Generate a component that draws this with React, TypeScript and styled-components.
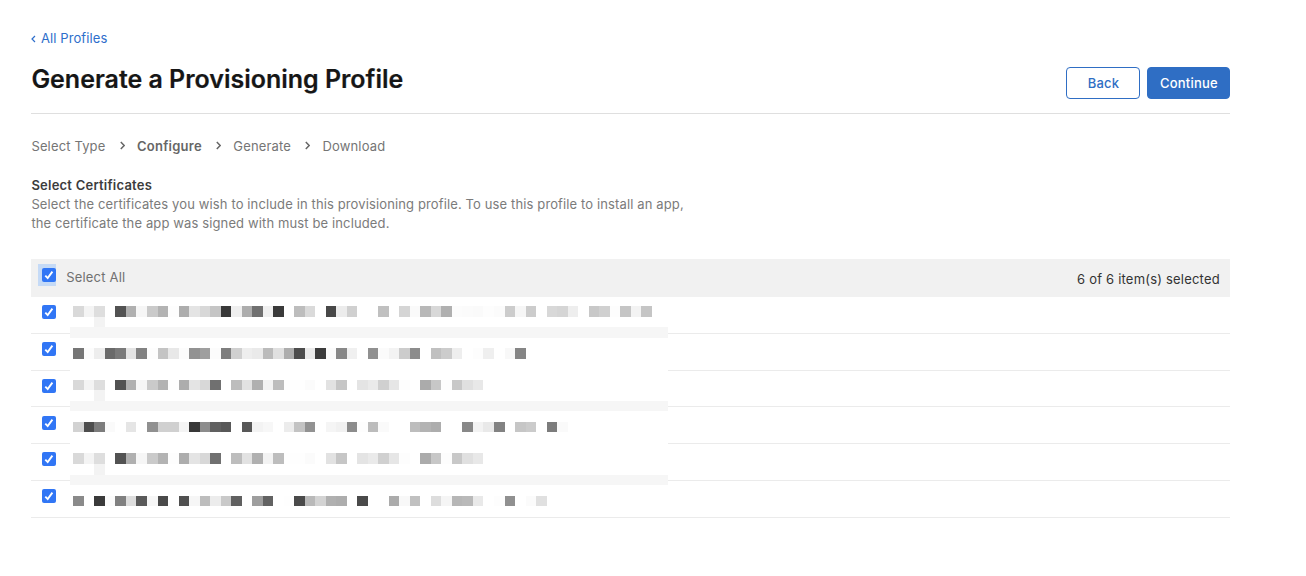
import React from "react";
import styled, { createGlobalStyle } from "styled-components";

const GlobalStyle = createGlobalStyle`
  *, *::before, *::after { box-sizing: border-box; }
  body {
    margin: 0;
    background: #fff;
    color: #333;
    font-family: Inter, "Liberation Sans", sans-serif;
    font-size: 13px;
  }
`;

const Page = styled.main`
  width: 1230.4px;
  padding: 27.5px 0 0 31.4px;
`;

const BackLink = styled.a`
  display: flex;
  align-items: center;
  height: 21px;
  color: #2d6ecb;
  font-size: 13px;
  letter-spacing: 0.11px;
  text-decoration: none;

  svg { margin: 2px 4.5px 0 0; }
`;

const Header = styled.header`
  display: flex;
  justify-content: space-between;
  height: 65px;
  padding-top: 12px;
  border-bottom: 1px solid #dfdfdf;
`;

const Title = styled.h1`
  margin: 0;
  color: #161616;
  font-size: 25px;
  font-weight: 600;
  line-height: 36px;
  letter-spacing: -0.02px;
  -webkit-text-stroke: 0.2px #161616;
`;

const Actions = styled.div`
  display: flex;
  gap: 7px;
  padding-top: 6.5px;
`;

const Button = styled.button<{ $primary?: boolean }>`
  width: ${(p) => (p.$primary ? 83 : 74)}px;
  height: 32px;
  padding: 0 0 1px 0;
  border: 1px solid #2f6ec4;
  border-radius: 4px;
  background: ${(p) => (p.$primary ? "#2f6ec4" : "#fff")};
  color: ${(p) => (p.$primary ? "#fff" : "#2f6ec4")};
  font: 500 13px Inter, "Liberation Sans", sans-serif;
  letter-spacing: 0.2px;
`;

const Steps = styled.nav`
  display: flex;
  align-items: center;
  height: 20px;
  margin-top: 22px;
  color: #757575;
  font-size: 13px;
  letter-spacing: 0.15px;

  svg { margin: -1px 12px 0 14.5px; }
`;

const Step = styled.span<{ $current?: boolean }>`
  font-weight: ${(p) => (p.$current ? 600 : 400)};
  color: ${(p) => (p.$current ? "#666" : "#757575")};
  letter-spacing: ${(p) => (p.$current ? 0.25 : 0.15)}px;
`;

const Intro = styled.section`
  margin-top: 20.1px;
  line-height: 19px;
`;

const IntroTitle = styled.h2`
  margin: 0;
  color: #3c3c3c;
  font-size: 13px;
  font-weight: 600;
  letter-spacing: 0.23px;
`;

const IntroText = styled.p`
  margin: 0;
  color: #7b7b7b;
  letter-spacing: 0.125px;
`;

const List = styled.section`
  position: relative;
  margin-top: 26.4px;
`;

const ListHeader = styled.div`
  display: flex;
  align-items: center;
  height: 37.6px;
  padding: 0 10.5px 0 6.6px;
  background: #f1f1f1;
`;

const FocusRing = styled.span`
  width: 18px;
  height: 22px;
  margin-top: -5px;
  padding: 4px 0 0 4px;
  background: #c5daf6;
`;

const SelectAll = styled.span`
  margin: -1px 0 0 10.2px;
  color: #707070;
  letter-spacing: 0.2px;
`;

const Count = styled.span`
  margin: 3px 0 0 auto;
  color: #333;
  letter-spacing: 0.2px;
`;

const Rows = styled.div`
  padding-top: 0.4px;
`;

const Row = styled.div`
  height: 36.8px;
  padding: 8.2px 0 0 10.6px;
  border-bottom: 1px solid #ebebeb;
`;

const Box = styled.span`
  display: grid;
  place-items: center;
  width: 14px;
  height: 14px;
  border-radius: 2px;
  background: #3176f5;
`;

const Mosaic = styled.div`
  position: absolute;
  top: 37.6px;
  left: 38.9px;
  width: 597.3px;
  height: 216px;
  padding-top: 9.7px;
  background: #fff;
`;

const MosaicRow = styled.div<{ $fill?: string }>`
  display: flex;
  height: 10.53px;
  padding-left: 3.1px;
  background: ${(p) => p.$fill ?? "transparent"};
`;

const Tile = styled.span<{ $shade: string }>`
  flex: 0 0 10.53px;
  background: ${(p) => (p.$shade === "--" ? "transparent" : `#${p.$shade.repeat(3)}`)};
`;

const tailRow =
  "d9 f4 de -- 52 b0 f6 ca b3 fd ad e4 d8 70 -- bd e2 b0 f3 bd fe fe fb -- e2 c6 -- e4 ea d0 e6 fd -- ab c7 fd c8 e0 e8";
const descender = "-- -- f3";

/* Grey levels of every tile, one string per mosaic row. */
const mosaic: { tiles?: string; fill?: string }[] = [
  { tiles: "d9 f4 de -- 52 b0 f6 ca b3 fd ad e4 d8 c5 38 ef ad 70 f0 3a -- bd da -- 48 ec d0 -- -- c0 -- d5 fa b8 d8 b0 fc fb fa fd fb cc f6 cc -- d8 d5 ee -- c8 d0 fd c5 f3 c5" },
  { tiles: descender },
  { fill: "#f6f6f6" },
  {},
  { tiles: "76 fc ed 6a 7a e4 82 fd c4 e8 fc 92 9f fc 7e d0 ee ea bb e0 ad 4c ea 3c fb 88 f0 -- 90 fb f3 cc 8c -- c0 cc ee -- fd ef -- f8 85" },
  {},
  {},
  { tiles: tailRow },
  { tiles: descender },
  { fill: "#f6f6f6" },
  {},
  { tiles: "d2 4d 7c fa -- e5 -- 90 d0 d0 f4 38 8c 60 58 -- 58 f3 f7 -- ec c3 92 -- f5 f1 8c fd bc fa -- -- bd b3 ad -- -- 88 f3 e9 82 -- c6 cb -- 7c fa" },
  {},
  {},
  { tiles: tailRow },
  { tiles: descender },
  { fill: "#f6f6f6" },
  {},
  { tiles: "8a -- 3a fb 80 dd 5a f6 4a -- 50 f6 bd ec c9 60 -- 9e 62 -- fe 4a b9 d3 b0 ad -- 4a -- -- ab f8 c0 -- dd f5 b6 b9 e9 -- fd 90 -- fb e0" },
];

const Checkbox = () => (
  <Box role="checkbox" aria-checked="true">
    <svg width="14" height="14" viewBox="0 0 14 14" fill="none">
      <path d="M3.3 7.6 5.7 10.1 10.4 3.6" stroke="#fff" strokeWidth="1.9" />
    </svg>
  </Box>
);

const Separator = () => (
  <svg width="5" height="9" viewBox="0 0 5 9" fill="none">
    <path d="M0.8 0.9 4.2 4.4 0.8 7.9" stroke="#666" strokeWidth="1.5" />
  </svg>
);

const steps = ["Select Type", "Configure", "Generate", "Download"];

export default function App() {
  return (
    <>
      <GlobalStyle />
      <Page>
        <BackLink>
          <svg width="5" height="8" viewBox="0 0 5 8" fill="none">
            <path d="M4 1 1 4 4 7" stroke="#2d6ecb" strokeWidth="1.2" />
          </svg>
          All Profiles
        </BackLink>
        <Header>
          <Title>Generate a Provisioning Profile</Title>
          <Actions>
            <Button>Back</Button>
            <Button $primary>Continue</Button>
          </Actions>
        </Header>
        <Steps>
          {steps.map((name, i) => (
            <React.Fragment key={name}>
              {i > 0 && <Separator />}
              <Step $current={name === "Configure"}>{name}</Step>
            </React.Fragment>
          ))}
        </Steps>
        <Intro>
          <IntroTitle>Select Certificates</IntroTitle>
          <IntroText>
            Select the certificates you wish to include in this provisioning profile. To use this profile to install an app,
            <br />
            the certificate the app was signed with must be included.
          </IntroText>
        </Intro>
        <List>
          <ListHeader>
            <FocusRing>
              <Checkbox />
            </FocusRing>
            <SelectAll>Select All</SelectAll>
            <Count>6 of 6 item(s) selected</Count>
          </ListHeader>
          <Rows>
            {[1, 2, 3, 4, 5, 6].map((id) => (
              <Row key={id}>
                <Checkbox />
              </Row>
            ))}
          </Rows>
          <Mosaic>
            {mosaic.map((row, y) => (
              <MosaicRow key={y} $fill={row.fill}>
                {row.tiles?.split(" ").map((shade, x) => (
                  <Tile key={x} $shade={shade} />
                ))}
              </MosaicRow>
            ))}
          </Mosaic>
        </List>
      </Page>
    </>
  );
}
